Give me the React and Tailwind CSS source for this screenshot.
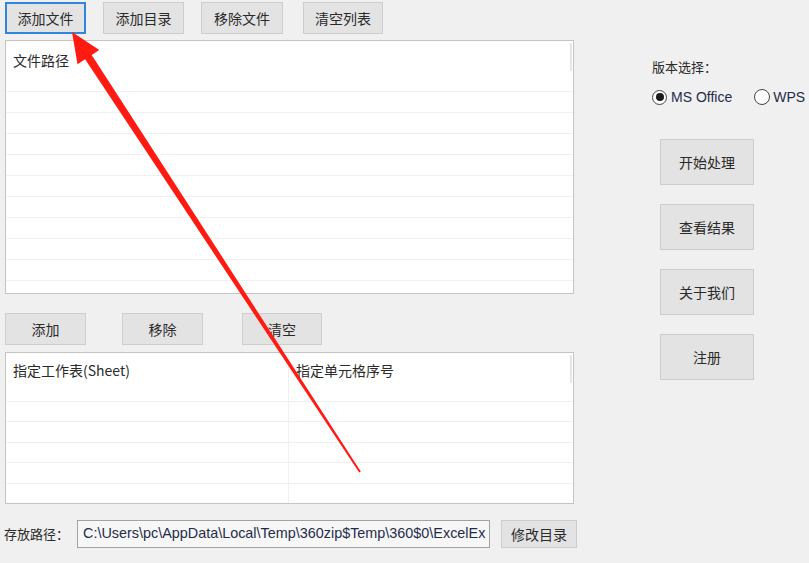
import React from "react";

const cjk = "font-['Noto_Sans_CJK_SC','Noto_Sans',sans-serif]";

function Btn({ children, className = "", focused = false }) {
  return (
    <div
      className={
        "flex items-center justify-center text-[14px] text-[#2a2a2a] " +
        (focused
          ? "border-2 border-[#2f86dc] bg-[#e3e3e3] "
          : "border border-[#cdcdcd] bg-[#e3e3e3] ") +
        className
      }
    >
      {children}
    </div>
  );
}

function Rows({ n }) {
  return Array.from({ length: n }).map((_, i) => (
    <div key={i} className="h-[21px] border-t border-[#f0f0f0]" />
  ));
}

export default function App() {
  return (
    <div className={"relative w-[809px] h-[563px] overflow-hidden bg-[#f0f0f0] " + cjk}>
      <div className="flex">
        {/* left column */}
        <div className="pl-[5px] w-[580px] flex flex-col">
          <div className="flex pt-[2px]">
            <Btn focused className="w-[81px] h-[32px]">添加文件</Btn>
            <Btn className="w-[81px] h-[32px] ml-[17px]">添加目录</Btn>
            <Btn className="w-[82px] h-[32px] ml-[17px]">移除文件</Btn>
            <Btn className="w-[80px] h-[32px] ml-[20px]">清空列表</Btn>
          </div>

          <div className="relative mt-[6px] w-[569px] h-[254px] border border-[#c4c4c4] bg-white overflow-hidden">
            <div className="h-[50px] pl-[7px] pt-[9px] text-[14px] leading-[20px] text-[#2a2a2a]">文件路径</div>
            <Rows n={10} />
            <div className="absolute right-[1px] top-[2px] w-[2px] h-[28px] bg-[#e6e6e6]" />
          </div>

          <div className="flex mt-[19px]">
            <Btn className="w-[81px] h-[32px]">添加</Btn>
            <Btn className="w-[81px] h-[32px] ml-[36px]">移除</Btn>
            <Btn className="w-[80px] h-[32px] ml-[39px]">清空</Btn>
          </div>

          <div className="relative mt-[7px] w-[569px] h-[152px] border border-[#c4c4c4] bg-white overflow-hidden flex">
            <div className="w-[283px] border-r border-[#f0f0f0] flex flex-col">
              <div className="h-[49px] pl-[7px] pt-[7px] text-[14px] leading-[20px] text-[#2a2a2a]">指定工作表(Sheet)</div>
              <Rows n={5} />
            </div>
            <div className="flex-1 flex flex-col">
              <div className="h-[49px] pl-[7px] pt-[7px] text-[14px] leading-[20px] text-[#2a2a2a]">指定单元格序号</div>
              <Rows n={5} />
            </div>
            <div className="absolute right-[1px] top-[2px] w-[2px] h-[28px] bg-[#e6e6e6]" />
          </div>

          <div className="flex items-center mt-[16px] -ml-[1px]">
            <div className="w-[73px] text-[13px] text-[#2a2a2a]">存放路径：</div>
            <div className="w-[413px] h-[28px] border border-[#a3a3a3] bg-[#f7f7f7] flex items-center pl-[5px] overflow-hidden whitespace-nowrap font-['Liberation_Sans',sans-serif] text-[14.4px] text-[#1f2d4a]">
              C:\Users\pc\AppData\Local\Temp\360zip$Temp\360$0\ExcelEx
            </div>
            <Btn className="w-[76px] h-[28px] ml-[11px]">修改目录</Btn>
          </div>
        </div>

        {/* right column */}
        <div className="flex flex-col pl-[72px]">
          <div className="mt-[57px] text-[13px] leading-[20px] text-[#2a2a2a]">版本选择：</div>
          <div className="flex items-center mt-[10px] h-[20px] text-[14px] text-[#1f2d4a] font-['Liberation_Sans',sans-serif] whitespace-nowrap">
            <div className="w-[15px] h-[15px] rounded-full border border-[#444] bg-white flex items-center justify-center">
              <div className="w-[8px] h-[8px] rounded-full bg-[#1a1a1a]" />
            </div>
            <span className="ml-[4px]">MS Office</span>
            <div className="ml-[22px] w-[16px] h-[16px] rounded-full border border-[#444] bg-white" />
            <span className="ml-[3px]">WPS</span>
          </div>
          <div className="flex flex-col gap-[19px] mt-[32px] ml-[8px]">
            <Btn className="w-[94px] h-[46px]">开始处理</Btn>
            <Btn className="w-[94px] h-[46px]">查看结果</Btn>
            <Btn className="w-[94px] h-[46px]">关于我们</Btn>
            <Btn className="w-[94px] h-[46px]">注册</Btn>
          </div>
        </div>
      </div>

      {/* red annotation arrow */}
      <svg className="absolute left-0 top-0 pointer-events-none" width="809" height="563">
        <polygon
          fill="#ff1a12"
          points="72,32 99.3,50 91.7,54.9 360.8,471.5 359.2,472.5 85.1,59.3 77.5,64.2"
        />
      </svg>
    </div>
  );
}
